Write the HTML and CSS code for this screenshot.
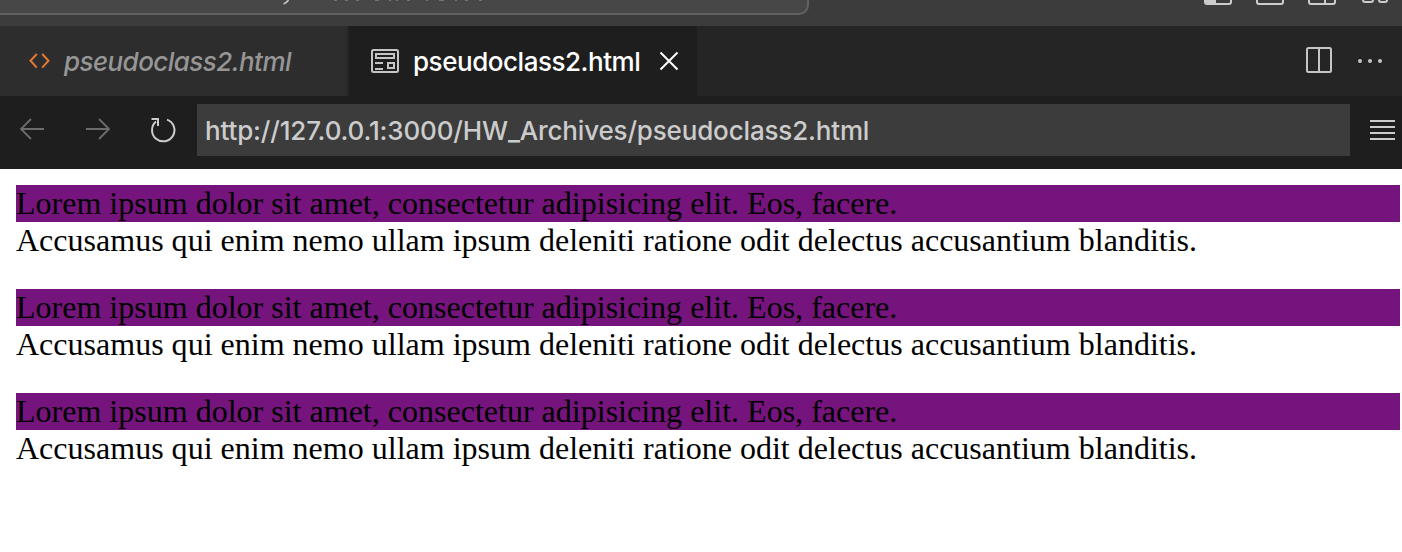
FILE: index.html
```html
<!DOCTYPE html>
<html lang="en">
<head>
<meta charset="utf-8">
<title>pseudoclass2.html</title>
<link rel="stylesheet" href="styles.css">
</head>
<body>
<header class="titlebar">
  <div class="command-center">
    <svg class="title-remnant" width="520" height="6" viewBox="0 0 520 6"><path d="M288.5 0Q286 3.5 283.5 3.8" fill="none" stroke="#c4c4c4" stroke-width="1.8"/><path d="M334 .4h3M345 .4h3M356 .4h3M375 .4h4M389 .4h2M396 .4h2M407 .4h3M426 .4h2M439 .4h5M455 .4h2M465 .4h3M479 .4h3" stroke="#888" stroke-width=".8"/></svg>
  </div>
  <svg class="layout-controls" width="190" height="6" viewBox="0 0 190 6" fill="none" stroke="#ccc" stroke-width="2"><path d="M0 0V2q0 2 2 2H24q2 0 2-2V0"/><path d="M0 0H11V4H2z" fill="#ccc" stroke="none"/><path d="M52 0V2q0 2 2 2H76q2 0 2-2V0M104 0V2q0 2 2 2H128q2 0 2-2V0M120 0V4M158 0q0 2 2 2h6q2 0 2-2M174 0q0 2 2 2h4q2 0 2-2"/></svg>
</header>
<nav class="tabs">
  <div class="tab tab-preview">
    <svg class="code-icon" width="22" height="18" viewBox="0 0 22 18" fill="none" stroke="#e37933" stroke-width="2"><path d="M8.8 2L2.5 8.8l6.3 6.8M14.2 2l6.3 6.8-6.3 6.8"/></svg>
    <span class="tab-label">pseudoclass2.html</span>
  </div>
  <div class="tab tab-active">
    <svg class="preview-icon" width="28" height="24" viewBox="0 0 28 24" fill="none" stroke="#c5c5c5" stroke-width="2"><rect x="1" y="1" width="26" height="22" rx="1.5"/><path d="M5 5H23V9H5zM4 14H12M4 20H12M17 14H23V19H17z"/></svg>
    <span class="tab-label">pseudoclass2.html</span>
    <svg class="close-icon" width="20" height="20" viewBox="0 0 20 20" fill="none" stroke="#fff" stroke-width="2"><path d="M1.5 1.5l17 17M18.5 1.5l-17 17"/></svg>
  </div>
  <div class="tab-actions">
    <svg width="26" height="26" viewBox="0 0 26 26" fill="none" stroke="#c5c5c5" stroke-width="2"><rect x="1" y="1" width="24" height="24" rx="1.5"/><path d="M13 1V25"/></svg>
    <svg width="26" height="26" viewBox="0 0 26 26" fill="#c5c5c5"><circle cx="3" cy="14" r="2"/><circle cx="13" cy="14" r="2"/><circle cx="23" cy="14" r="2"/></svg>
  </div>
</nav>
<div class="toolbar">
  <svg class="nav-icons" width="197" height="52" viewBox="0 0 197 52" fill="none" stroke-width="1.8"><path d="M44 25H21M31 15L21 25l10 10M86 25h23M99 15l10 10-10 10" stroke="#6c6c6c"/><path d="M167 15.6A11.2 11.2 0 1 1 156 17.6M151.5 15H158V22" stroke="#ccc" stroke-width="2"/></svg>
  <div class="address"><span class="url">http://127.0.0.1:3000/HW_Archives/pseudoclass2.html</span></div>
  <svg class="menu-icon" width="25" height="22" viewBox="0 0 25 22" stroke="#ccc" stroke-width="2"><path d="M0 2H25M0 8H25M0 14H25M0 20H25"/></svg>
</div>
<main class="page">
  <p class="entry"><span class="first-line">Lorem ipsum dolor sit amet, consectetur adipisicing elit. Eos, facere.</span><span class="line">Accusamus qui enim nemo ullam ipsum deleniti ratione odit delectus accusantium blanditis.</span></p>
  <p class="entry"><span class="first-line">Lorem ipsum dolor sit amet, consectetur adipisicing elit. Eos, facere.</span><span class="line">Accusamus qui enim nemo ullam ipsum deleniti ratione odit delectus accusantium blanditis.</span></p>
  <p class="entry"><span class="first-line">Lorem ipsum dolor sit amet, consectetur adipisicing elit. Eos, facere.</span><span class="line">Accusamus qui enim nemo ullam ipsum deleniti ratione odit delectus accusantium blanditis.</span></p>
</main>
</body>
</html>
```
FILE: styles.css
```css
* { box-sizing: border-box; }
body { margin: 0; height: 552px; overflow: hidden; background: #fff; font-family: Inter, "Liberation Sans", sans-serif; }
svg { display: block; flex: none; overflow: visible; }
.titlebar { height: 26px; background: #3c3c3c; display: flex; justify-content: space-between; align-items: flex-start; overflow: hidden; }
.command-center { width: 809px; height: 15px; background: #474747; border: solid #616161; border-width: 0 2px 2px 0; border-bottom-right-radius: 10px; }
.layout-controls { margin-right: 7px; }
.tabs { height: 70px; background: #252526; display: flex; }
.tab { display: flex; align-items: center; height: 70px; white-space: nowrap; font-size: 26px; line-height: 36px; font-weight: 500; }
.tab-label { padding-top: 2px; }
.tab-preview { width: 349px; padding-left: 28px; background: #2d2d2d; border-right: 2px solid #252526; color: #969696; font-style: italic; }
.code-icon { margin-right: 14px; }
.tab-preview .tab-label { letter-spacing: -0.55px; }
.tab-active { width: 348px; padding-left: 22px; background: #1e1e1e; color: #fff; }
.tab-active .tab-label { width: 228px; letter-spacing: -0.46px; }
.preview-icon { margin-right: 14px; }
.close-icon { margin-left: 18px; }
.tab-actions { margin-left: auto; padding: 0 19px 2px 0; display: flex; align-items: center; gap: 25px; }
.toolbar { height: 73px; padding: 8px 7px 13px 0; background: #1e1e1e; display: flex; align-items: center; }
.address { width: 1153px; height: 52px; padding-left: 8px; background: #3c3c3c; color: #ccc; display: flex; align-items: center; font-size: 26px; font-weight: 500; }
.url { white-space: nowrap; letter-spacing: -0.16px; }
.menu-icon { margin-left: auto; }
.page { padding: 16px 2px 0 16px; font-family: "Liberation Serif", serif; font-size: 32px; color: #000; }
.entry { margin: 0 0 30px; }
.first-line, .line { display: block; height: 37px; line-height: 37px; white-space: nowrap; letter-spacing: 0.01px; }
.first-line { background: #75147c; }
```
